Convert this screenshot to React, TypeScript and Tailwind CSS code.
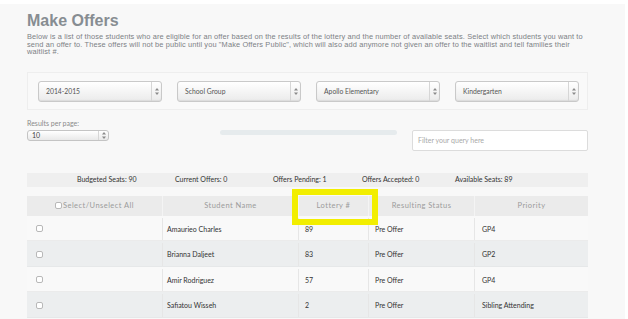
import React from 'react';

const sans = { fontFamily: '"Liberation Sans", Arial, sans-serif' };

const Arrows = () => (
  <svg width="4" height="7" viewBox="0 0 4 7" fill="#8a8a8a">
    <path d="M2 0 L4 2.5 L0 2.5 Z" />
    <path d="M2 7 L4 4.5 L0 4.5 Z" />
  </svg>
);

const Select = ({ label, small }: { label: string; small?: boolean }) => (
  <div
    className={
      small
        ? 'flex h-[11px] w-[82px] items-center rounded-[3px] border border-[#c4c4c4] bg-linear-to-b from-white to-[#e9e9e9]'
        : 'flex h-[21px] w-[124px] items-center rounded-[3px] border border-[#c9c9c9] bg-linear-to-b from-white to-[#ebebeb] shadow-[inset_0_-1px_1px_#dcdcdc]'
    }
  >
    <span className={small ? 'flex-1 pl-[4px] text-[7px] leading-none text-[#444]' : 'flex-1 pl-[7px] text-[6.8px] leading-none text-[#555]'}>
      {label}
    </span>
    <span className="flex h-full w-[10px] items-center justify-center border-l border-[#d6d6d6]">
      <Arrows />
    </span>
  </div>
);

const Check = () => <span className="inline-block h-[7px] w-[7px] rounded-[2px] border border-[#b8b8b8] bg-white" />;

const students = [
  { name: 'Amaurieo Charles', lottery: '89', status: 'Pre Offer', priority: 'GP4' },
  { name: 'Brianna Daljeet', lottery: '83', status: 'Pre Offer', priority: 'GP2' },
  { name: 'Amir Rodriguez', lottery: '57', status: 'Pre Offer', priority: 'GP4' },
  { name: 'Safiatou Wisseh', lottery: '2', status: 'Pre Offer', priority: 'Sibling Attending' },
];

const App = () => {
  return (
    <div className="min-h-screen bg-white pt-[4px] pr-[3px]" style={{ fontFamily: 'Lato, "Open Sans", sans-serif' }}>
      <div className="bg-[#f8f8f8] pt-[9px] pr-[37px] pl-[27px] pb-[4px]">
        <h1 className="text-[16px] leading-[16px] font-bold text-[#878d92]" style={sans}>
          Make Offers
        </h1>
        <p className="mt-[4px] text-[7.4px] leading-[7.5px] tracking-[0.13px] whitespace-nowrap text-[#7c8185]" style={sans}>
          Below is a list of those students who are eligible for an offer based on the results of the lottery and the number of available seats. Select which students you want to
          <br />
          send an offer to. These offers will not be public until you "Make Offers Public", which will also add anymore not given an offer to the waitlist and tell families their
          <br />
          waitlist #.
        </p>

        <div className="mt-[16px] flex gap-[15px] border border-[#eeeeee] bg-[#f9f9f9] pt-[8px] pr-[8px] pb-[7px] pl-[10px]">
          <Select label="2014-2015" />
          <Select label="School Group" />
          <Select label="Apollo Elementary" />
          <Select label="Kindergarten" />
        </div>

        <div className="mt-[9px] flex items-start">
          <div className="w-[193px]">
            <div className="text-[7px] leading-[8px] text-[#8a8a8a]">Results per page:</div>
            <div className="mt-[3px]">
              <Select label="10" small />
            </div>
          </div>
          <div className="mt-[11px] h-[5px] w-[177px] rounded-full bg-[#e6ebed]" />
          <div className="mt-[11px] ml-[15px] flex h-[21px] flex-1 items-center rounded-[2px] border border-[#dcdcdc] bg-white pl-[5px] text-[7px] text-[#a9a9a9]">
            Filter your query here
          </div>
        </div>

        <div className="mt-[22px] flex h-[14px] items-center bg-[#efefef] text-[7px] text-[#333]">
          <span className="ml-[50px] w-[98px]">Budgeted Seats: 90</span>
          <span className="w-[98px]">Current Offers: 0</span>
          <span className="w-[89px]">Offers Pending: 1</span>
          <span className="w-[93px]">Offers Accepted: 0</span>
          <span>Available Seats: 89</span>
        </div>

        <div className="relative mt-[9px]">
          <div className="flex h-[20px] items-center bg-[#ebebeb] text-[7.5px] tracking-[0.06em] text-[#9b9b9b]">
            <div className="flex h-full w-[136px] items-center justify-center gap-[1px] border-r border-[#f4f4f4]">
              <Check />
              Select/Unselect All
            </div>
            <div className="flex h-full w-[136px] items-center justify-center border-r border-[#f4f4f4]">Student Name</div>
            <div className="flex h-full w-[70px] items-center justify-center border-r border-[#f4f4f4]">Lottery #</div>
            <div className="flex h-full w-[106px] items-center justify-center border-r border-[#f4f4f4]">Resulting Status</div>
            <div className="flex h-full flex-1 items-center justify-center">Priority</div>
          </div>
          {students.map((s, i) => (
            <div
              key={s.name}
              className={
                i % 2 === 1
                  ? 'flex h-[25.5px] items-center border-b border-[#e6e8e9] bg-[#eceeef] pt-[2px] text-[7px] text-[#333]'
                  : 'flex h-[25.5px] items-center border-b border-[#ebebeb] bg-[#f9f9f9] pt-[2px] text-[7px] text-[#333]'
              }
            >
              <div className="flex h-full w-[136px] items-center border-r border-[#e6e6e6] pl-[9px]">
                <Check />
              </div>
              <div className="flex h-full w-[136px] items-center border-r border-[#e6e6e6] pl-[4px]">{s.name}</div>
              <div className="flex h-full w-[70px] items-center border-r border-[#e6e6e6] pl-[6px]">{s.lottery}</div>
              <div className="flex h-full w-[106px] items-center border-r border-[#e6e6e6] pl-[6px]">{s.status}</div>
              <div className="flex h-full flex-1 items-center pl-[7px]">{s.priority}</div>
            </div>
          ))}
          <div className="absolute top-[-7px] left-[265px] h-[36px] w-[86px] border-[6px] border-[#f2ee00]" />
        </div>
      </div>
    </div>
  );
};

export default App;
